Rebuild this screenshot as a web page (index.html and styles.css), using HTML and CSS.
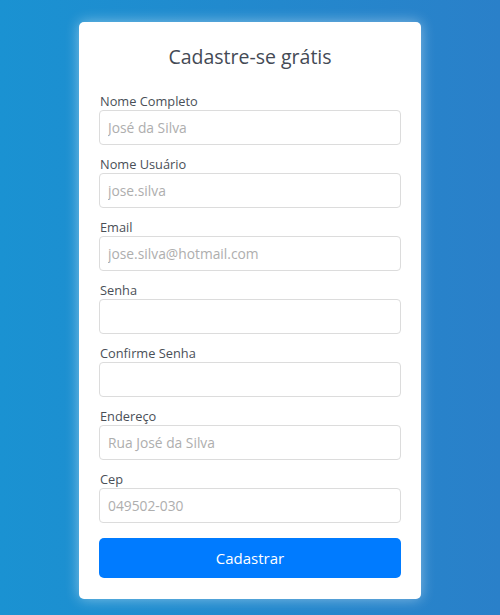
FILE: index.html
```html
<!DOCTYPE html>
<html lang="pt">
<head>
<meta charset="utf-8">
<link rel="stylesheet" href="styles.css">
</head>
<body>
<div class="page">
  <form class="card">
    <h1 class="title">Cadastre-se grátis</h1>
    <div class="group"><label class="label">Nome Completo</label><input class="input" placeholder="José da Silva"></div>
    <div class="group"><label class="label">Nome Usuário</label><input class="input" placeholder="jose.silva"></div>
    <div class="group"><label class="label">Email</label><input class="input" placeholder="jose.silva@hotmail.com"></div>
    <div class="group"><label class="label">Senha</label><input class="input" type="password"></div>
    <div class="group"><label class="label">Confirme Senha</label><input class="input" type="password"></div>
    <div class="group"><label class="label">Endereço</label><input class="input" placeholder="Rua José da Silva"></div>
    <div class="group"><label class="label">Cep</label><input class="input" placeholder="049502-030"></div>
    <button class="btn" type="button">Cadastrar</button>
  </form>
</div>
</body>
</html>
```
FILE: styles.css
```css
html, body { margin: 0; padding: 0; }
body {
  width: 500px;
  height: 615px;
  overflow: hidden;
  background: linear-gradient(to right, #1a92d2, #2a80c9);
  font-family: "Open Sans", "Noto Sans", sans-serif;
}
.page {
  display: flex;
  justify-content: center;
  padding-top: 22px;
}
.card {
  width: 342px;
  box-sizing: border-box;
  background: #fff;
  border-radius: 5px;
  padding: 22px 20px 21px;
  box-shadow: 0 0 14px rgba(255,255,255,0.45);
  display: flex;
  flex-direction: column;
}
.title {
  margin: 0 0 22px;
  font-size: 19.5px;
  line-height: 26px;
  font-weight: 400;
  color: #444a55;
  text-align: center;
}
.group {
  display: flex;
  flex-direction: column;
  margin-bottom: 10px;
}
.label {
  font-size: 12.8px;
  line-height: 18px;
  color: #4a4f57;
  padding-left: 1px;
}
.input {
  height: 35px;
  box-sizing: border-box;
  border: 1px solid #dcdcdc;
  border-radius: 4px;
  padding: 0 8px;
  font-family: inherit;
  font-size: 13.8px;
  color: #333;
  outline: none;
}
.input::placeholder { color: #aeaeae; }
.btn {
  margin-top: 5px;
  height: 40px;
  border: none;
  border-radius: 5px;
  background: #007bff;
  color: #fff;
  font-family: inherit;
  font-size: 15px;
}
```
